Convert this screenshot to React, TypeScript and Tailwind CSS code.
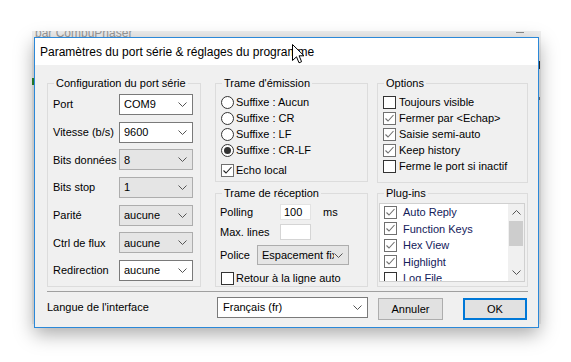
import React from "react";

function Chevron({ up = false }: { up?: boolean }) {
  return (
    <svg width="9" height="5" viewBox="0 0 9 5" className="shrink-0">
      <path
        d={up ? "M0.5 4.5L4.5 0.5L8.5 4.5" : "M0.5 0.5L4.5 4.5L8.5 0.5"}
        fill="none"
        stroke="#555"
        strokeWidth="1"
      />
    </svg>
  );
}

function Combo({ value, gray = false, className = "" }: { value: string; gray?: boolean; className?: string }) {
  const look = gray ? "bg-[#e5e5e5] border-[#adadad]" : "bg-white border-[#7a7a7a]";
  return (
    <div className={`flex items-center border pl-[4px] pr-[5px] ${look} ${className}`}>
      <span className="flex-1 overflow-hidden whitespace-nowrap">{value}</span>
      <Chevron />
    </div>
  );
}

function Check({ checked = false, mark = "#333" }: { checked?: boolean; mark?: string }) {
  return (
    <span className={`w-[13px] h-[13px] shrink-0 bg-white border ${checked ? "border-[#707070]" : "border-[#333]"}`}>
      {checked && (
        <svg width="11" height="11" viewBox="0 0 11 11">
          <path d="M1.5 5.5L4 8L9.5 2" fill="none" stroke={mark} strokeWidth="1.1" />
        </svg>
      )}
    </span>
  );
}

function Radio({ checked = false }: { checked?: boolean }) {
  return (
    <span className="w-[13px] h-[13px] shrink-0 rounded-full bg-white border border-[#333] flex items-center justify-center">
      {checked && <span className="w-[7px] h-[7px] rounded-full bg-[#333]" />}
    </span>
  );
}

function Group({ title, className = "", children }: { title: string; className?: string; children: React.ReactNode }) {
  return (
    <fieldset className={`border border-[#dcdcdc] ${className}`}>
      <legend className="ml-[6px] px-[2px] leading-[16px]">{title}</legend>
      {children}
    </fieldset>
  );
}

const portRows = [
  { label: "Port", value: "COM9", gray: false },
  { label: "Vitesse (b/s)", value: "9600", gray: false },
  { label: "Bits données", value: "8", gray: true },
  { label: "Bits stop", value: "1", gray: true },
  { label: "Parité", value: "aucune", gray: true },
  { label: "Ctrl de flux", value: "aucune", gray: true },
  { label: "Redirection", value: "aucune", gray: false },
];

const suffixes = ["Aucun", "CR", "LF", "CR-LF"];

const options = [
  { label: "Toujours visible", checked: false },
  { label: "Fermer par <Echap>", checked: true },
  { label: "Saisie semi-auto", checked: true },
  { label: "Keep history", checked: true },
  { label: "Ferme le port si inactif", checked: false },
];

const plugins = [
  { label: "Auto Reply", checked: true },
  { label: "Function Keys", checked: true },
  { label: "Hex View", checked: true },
  { label: "Highlight", checked: true },
  { label: "Log File", checked: false },
];

export default function App() {
  return (
    <div className="relative w-[571px] h-[362px] bg-white overflow-hidden font-['Liberation_Sans',Arial,sans-serif] text-[11px] text-black">
      {/* fenêtre principale derrière */}
      <div className="absolute left-[32px] top-[31px] w-[509px] h-[293px] bg-[#f0f0f0] overflow-hidden">
        <div className="absolute left-[3px] top-[-7px] text-[12px] text-[#9a9a9a]">par CompuPhaser</div>
        <div className="absolute left-[484px] top-[1px] w-[8px] h-px bg-[#8a8a8a]" />
        <div className="absolute left-[0px] top-[47px] w-[2px] h-[7px] bg-[#2e8b2e]" />
        <div className="absolute left-[507px] top-[30px] w-px h-[8px] bg-[#333]" />
        <div className="absolute left-[507px] top-[66px] w-px h-[3px] bg-[#777]" />
      </div>

      {/* dialogue */}
      <div className="absolute left-[34px] top-[37px] w-[505px] h-[291px] flex flex-col border border-[#2b88d8] bg-[#f0f0f0] shadow-[0_6px_18px_rgba(0,0,0,0.34)]">
        <div className="h-[27px] shrink-0 bg-white flex items-center pl-[5px] text-[12px]">
          Paramètres du port série &amp; réglages du programme
        </div>

        <div className="pt-[10px] pl-[12px]">
          <div className="flex">
            <Group title="Configuration du port série" className="w-[154px] h-[212px]">
              <div className="mt-[3px] pl-[5px] flex flex-col gap-[6.67px]">
                {portRows.map((r) => (
                  <div key={r.label} className="flex items-center">
                    <span className="w-[66px]">{r.label}</span>
                    <Combo value={r.value} gray={r.gray} className="w-[74px] h-[21px]" />
                  </div>
                ))}
              </div>
            </Group>

            <div className="ml-[14px] w-[153px] flex flex-col gap-[3px]">
              <Group title="Trame d'émission" className="h-[107px]">
                <div className="mt-[3px] pl-[5px]">
                  {suffixes.map((s) => (
                    <div key={s} className="h-[16px] flex items-center gap-[2px]">
                      <Radio checked={s === "CR-LF"} />
                      <span>Suffixe : {s}</span>
                    </div>
                  ))}
                  <div className="mt-[4px] h-[16px] flex items-center gap-[2px]">
                    <Check checked mark="#222" />
                    <span>Echo local</span>
                  </div>
                </div>
              </Group>

              <Group title="Trame de réception" className="h-[102px]">
                <div className="mt-[3px] pl-[4px]">
                  <div className="h-[16px] flex items-center">
                    <span className="w-[60px]">Polling</span>
                    <span className="w-[31px] h-[16px] bg-white border border-[#e3e3e3] pl-[3px] leading-[14px]">100</span>
                    <span className="ml-[12px]">ms</span>
                  </div>
                  <div className="mt-[4px] h-[16px] flex items-center">
                    <span className="w-[60px]">Max. lines</span>
                    <span className="w-[31px] h-[16px] bg-white border border-[#d5d5d5]" />
                  </div>
                  <div className="mt-[5px] flex items-center">
                    <span className="w-[37px]">Police</span>
                    <Combo value="Espacement fixe" gray className="w-[92px] h-[20px]" />
                  </div>
                  <div className="mt-[5px] h-[16px] flex items-center gap-[2px] pl-[1px]">
                    <Check />
                    <span>Retour à la ligne auto</span>
                  </div>
                </div>
              </Group>
            </div>

            <div className="ml-[9px] w-[151px] flex flex-col gap-[2px]">
              <Group title="Options" className="h-[108px]">
                <div className="mt-[3px] pl-[5px]">
                  {options.map((o) => (
                    <div key={o.label} className="h-[16px] flex items-center gap-[3px]">
                      <Check checked={o.checked} mark="#707070" />
                      <span>{o.label}</span>
                    </div>
                  ))}
                </div>
              </Group>

              <Group title="Plug-ins" className="h-[102px]">
                <div className="ml-[1px] mt-[2px] w-[146px] h-[79px] flex bg-white border border-[#d0d0d0]">
                  <div className="flex-1 pl-[4px] overflow-hidden text-[#13205a]">
                    {plugins.map((p) => (
                      <div key={p.label} className="h-[16.5px] flex items-center gap-[6px]">
                        <Check checked={p.checked} mark="#707070" />
                        <span>{p.label}</span>
                      </div>
                    ))}
                  </div>
                  <div className="w-[16px] flex flex-col bg-[#f0f0f0]">
                    <div className="h-[17px] flex items-center justify-center">
                      <Chevron up />
                    </div>
                    <div className="h-[25px] mx-[1px] bg-[#cdcdcd]" />
                    <div className="flex-1" />
                    <div className="h-[17px] flex items-center justify-center">
                      <Chevron />
                    </div>
                  </div>
                </div>
              </Group>
            </div>
          </div>

          <div className="mt-[4px] w-[481px] h-px bg-[#a0a0a0]" />

          <div className="mt-[5px] h-[22px] flex items-start">
            <span className="w-[170px] h-[21px] flex items-center">Langue de l'interface</span>
            <Combo value="Français (fr)" className="w-[151px] h-[21px] pl-[5px]" />
            <button className="ml-[10px] mt-[1px] w-[65px] h-[22px] bg-[#e1e1e1] border border-[#adadad]">
              Annuler
            </button>
            <button className="ml-[20px] mt-[1px] w-[64px] h-[22px] bg-[#e1e1e1] border-2 border-[#0078d7]">
              OK
            </button>
          </div>
        </div>
      </div>

      {/* curseur */}
      <svg className="absolute left-[292px] top-[44px]" width="13" height="21" viewBox="0 0 13 21">
        <path d="M0.5 0.5L0.5 16.5L4.5 12.8L7 18.8L9.6 17.7L7.1 11.8L12 11.8Z" fill="#fff" stroke="#000" strokeWidth="1" />
      </svg>
    </div>
  );
}
